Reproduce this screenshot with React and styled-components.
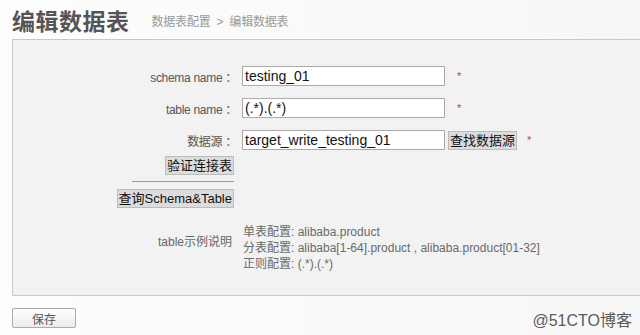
import React from 'react';
import styled, { createGlobalStyle } from 'styled-components';

const GlobalStyle = createGlobalStyle`
  html, body {
    margin: 0;
    padding: 0;
    background: #fff;
    font-family: "Liberation Sans", "Noto Sans CJK SC", sans-serif;
  }
`;

const Page = styled.div`
  width: 640px;
  height: 335px;
  overflow: hidden;
  position: relative;
  background: linear-gradient(to right, #fdfdfd, #f7f7f7);
`;

const Header = styled.div`
  display: flex;
  align-items: flex-end;
  height: 39px;
  padding-left: 12px;
  box-sizing: border-box;
`;

const Title = styled.h1`
  margin: 0 22px 0 0;
  font-size: 23px;
  line-height: 34px;
  font-weight: bold;
  color: #555;
  letter-spacing: 0.5px;
`;

const Crumb = styled.div`
  font-size: 12px;
  color: #999;
  padding-bottom: 10px;
  letter-spacing: -0.2px;
  span { margin: 0 6px; }
`;

const Panel = styled.div`
  margin-left: 12px;
  height: 257px;
  box-sizing: border-box;
  border: 1px solid #c8c8c8;
  border-right: none;
  background: #f2f2f2;
  padding-top: 26px;
`;

const Row = styled.div`
  display: flex;
  align-items: center;
  height: 20px;
  margin-bottom: ${({ gap }) => gap ?? 12}px;
`;

const Label = styled.div`
  width: 229px;
  text-align: right;
  font-size: 12px;
  letter-spacing: -0.3px;
  color: #555;
  padding-right: 5px;
  box-sizing: border-box;
  flex-shrink: 0;
  white-space: nowrap;
`;

const Input = styled.input`
  width: 203px;
  height: 20px;
  box-sizing: border-box;
  border: 1px solid #aaa;
  padding: 0 2px;
  font-size: 14px;
  font-family: "Liberation Sans", "Noto Sans CJK SC", sans-serif;
  color: #111;
  background: #fff;
  outline: none;
`;

const Star = styled.span`
  color: #d03060;
  font-size: 11px;
  margin-left: ${({ offset }) => offset ?? 10}px;
`;

const GrayButton = styled.button`
  height: 19px;
  padding: 0 1px;
  border: 1px solid #bbb;
  background: #dcdcdc;
  font-size: 13px;
  font-family: "Liberation Sans", "Noto Sans CJK SC", sans-serif;
  color: #111;
  line-height: 17px;
  margin-left: ${({ ml }) => ml ?? 0}px;
`;

const ButtonColumn = styled.div`
  width: 221px;
  display: flex;
  flex-direction: column;
  align-items: flex-end;
`;

const Divider = styled.div`
  width: 102px;
  height: 1px;
  background: #999;
  margin: 6px 0 7px;
`;

const NoteRow = styled.div`
  display: flex;
  margin-top: 16px;
`;

const NoteLabel = styled(Label)`
  width: 230px;
  padding-right: 11px;
  padding-top: 8px;
  color: #666;
  letter-spacing: 0;
`;

const NoteLines = styled.div`
  font-size: 12px;
  line-height: 16px;
  color: #6a6a6a;
`;

const Footer = styled.div`
  display: flex;
  justify-content: space-between;
  align-items: flex-end;
  padding: 11px 8px 0 12px;
`;

const SaveButton = styled.button`
  width: 64px;
  height: 20px;
  border: 1px solid #aaa;
  border-radius: 2px;
  background: linear-gradient(#fff, #ececec);
  font-size: 12px;
  color: #555;
  font-family: "Liberation Sans", "Noto Sans CJK SC", sans-serif;
`;

const Watermark = styled.div`
  font-size: 16px;
  color: #5a5a5a;
  margin-bottom: -3px;
`;

export default function App() {
  return (
    <Page>
      <GlobalStyle />
      <Header>
        <Title>编辑数据表</Title>
        <Crumb>数据表配置<span>&gt;</span>编辑数据表</Crumb>
      </Header>
      <Panel>
        <Row>
          <Label>schema name ：</Label>
          <Input defaultValue="testing_01" />
          <Star offset={12}>*</Star>
        </Row>
        <Row>
          <Label>table name ：</Label>
          <Input defaultValue="(.*).(.*)" />
          <Star offset={12}>*</Star>
        </Row>
        <Row gap={6}>
          <Label>数据源 ：</Label>
          <Input defaultValue="target_write_testing_01" />
          <GrayButton ml={3}>查找数据源</GrayButton>
          <Star offset={10}>*</Star>
        </Row>
        <ButtonColumn>
          <GrayButton>验证连接表</GrayButton>
          <Divider />
          <GrayButton>查询Schema&amp;Table</GrayButton>
        </ButtonColumn>
        <NoteRow>
          <NoteLabel>table示例说明</NoteLabel>
          <NoteLines>
            <div>单表配置: alibaba.product</div>
            <div>分表配置: alibaba[1-64].product , alibaba.product[01-32]</div>
            <div>正则配置: (.*).(.*)</div>
          </NoteLines>
        </NoteRow>
      </Panel>
      <Footer>
        <SaveButton>保存</SaveButton>
        <Watermark>@51CTO博客</Watermark>
      </Footer>
    </Page>
  );
}
